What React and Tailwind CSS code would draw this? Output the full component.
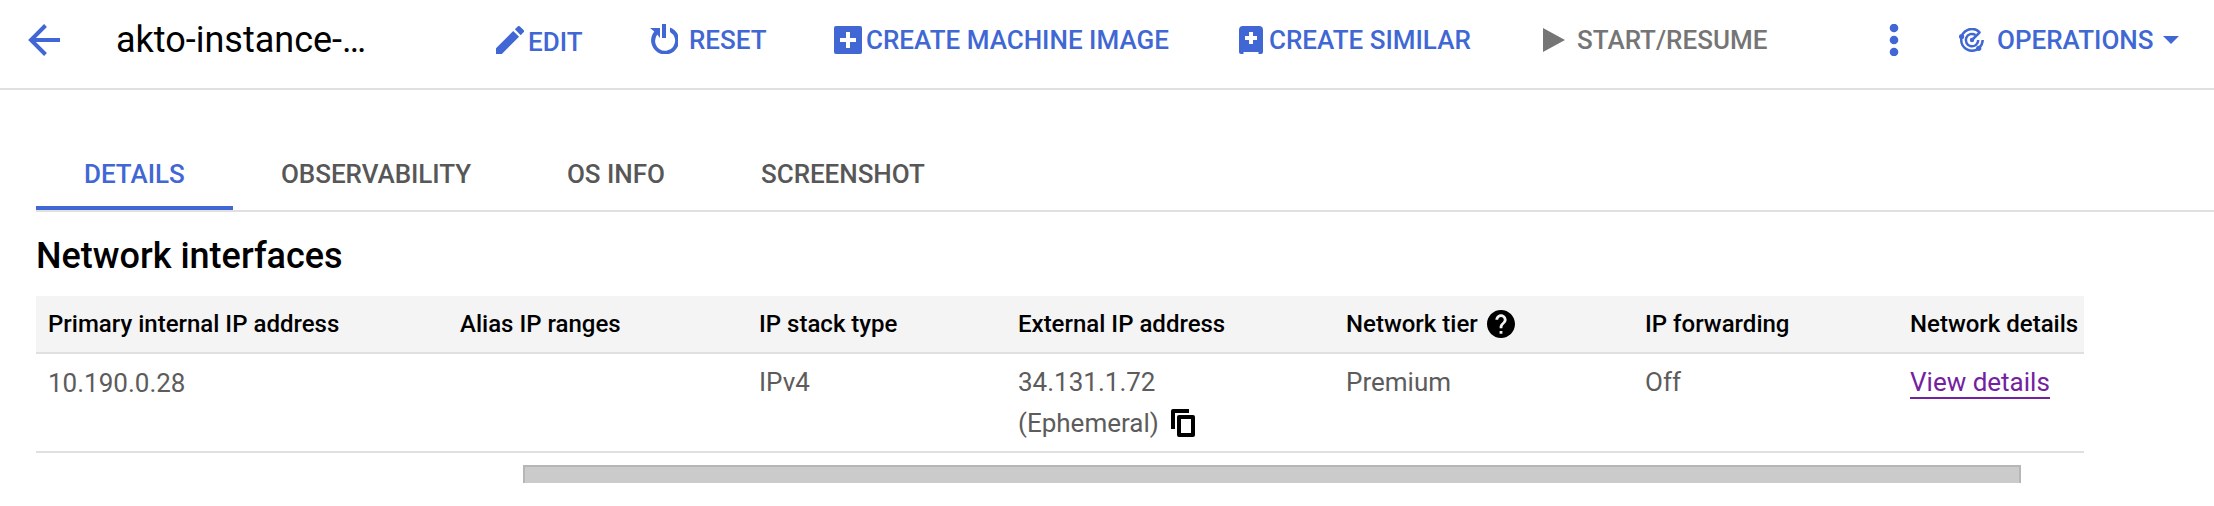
import React from "react";

function Action({ icon, label, className, labelClass = "" }) {
  return (
    <button type="button" className={`flex h-8 shrink-0 items-center whitespace-nowrap ${className}`}>
      {icon}
      <span className={labelClass}>{label}</span>
    </button>
  );
}

const BackIcon = () => (
  <svg className="h-8 w-8 shrink-0" viewBox="0 0 32 32" fill="none" stroke="currentColor" strokeWidth="4">
    <path d="M32 16H4M17.5 1.5 3 16l14.5 14.5" />
  </svg>
);

const PencilIcon = () => (
  <svg className="h-7 w-7 shrink-0" viewBox="3 3 18 18" fill="currentColor">
    <path d="M3 17.25V21h3.75L17.81 9.94l-3.75-3.75L3 17.25zM20.71 7.04a1 1 0 0 0 0-1.41l-2.34-2.34a1 1 0 0 0-1.41 0l-1.83 1.83 3.75 3.75 1.83-1.83z" />
  </svg>
);

const ResetIcon = () => (
  <svg className="h-[30px] w-7 shrink-0 self-start" viewBox="0 0 28 30" fill="currentColor">
    <path d="M12 0h4v14h-4z" />
    <path d="M0 4h10v10L7.3 10.5A10 10 0 1 0 20 8V3.4A14 14 0 1 1 4.3 7.6z" />
  </svg>
);

const AddBoxIcon = () => (
  <svg className="h-7 w-7 shrink-0" viewBox="0 0 28 28">
    <rect width="28" height="28" rx="2" fill="currentColor" />
    <path d="M14 6v16M6 14h16" stroke="white" strokeWidth="4" />
  </svg>
);

const SimilarIcon = () => (
  <svg className="h-7 w-6 shrink-0" viewBox="0 0 24 28">
    <path d="M4 0h16a4 4 0 0 1 4 4v22a2 2 0 0 1-2 2h-2.500v-2h-15v2H2a2 2 0 0 1-2-2V4a4 4 0 0 1 4-4z" fill="currentColor" />
    <path d="M12 6v12M6 12h12" stroke="white" strokeWidth="4" />
  </svg>
);

const PlayIcon = () => (
  <svg className="h-6 w-[22px] shrink-0" viewBox="0 0 22 24" fill="currentColor">
    <path d="M0 0l22 12L0 24z" />
  </svg>
);

const MoreIcon = () => (
  <svg className="h-8 w-[10px] shrink-0" viewBox="0 0 10 32" fill="currentColor">
    <circle cx="5" cy="4" r="4.300" />
    <circle cx="5" cy="16" r="4.300" />
    <circle cx="5" cy="28" r="4.300" />
  </svg>
);

const OperationsIcon = () => (
  <svg className="h-6 w-[25px] shrink-0" viewBox="0 0 25 24" fill="none" stroke="currentColor" strokeWidth="2.500">
    <path d="M20.700 4.300A10.800 10.800 0 0 0 2.200 12a10.800 10.800 0 0 0 17.500 8.300" />
    <path d="M23.700 12a10.800 10.800 0 0 1-3.500 7.700" />
    <path d="M16.500 7A6.200 6.200 0 1 0 19.200 12" />
    <path d="M13 12l8.200-8.200" />
    <circle cx="13" cy="12" r="2.200" fill="currentColor" stroke="none" />
    <circle cx="2.600" cy="8.500" r="2.600" fill="currentColor" stroke="none" />
    <circle cx="19.700" cy="20.300" r="2.600" fill="currentColor" stroke="none" />
  </svg>
);

const HelpIcon = () => (
  <svg className="h-7 w-7 shrink-0" viewBox="2 2 20 20" fill="currentColor">
    <path d="M12 2C6.480 2 2 6.480 2 12s4.480 10 10 10 10-4.480 10-10S17.520 2 12 2zm1 17h-2v-2h2v2zm2.070-7.750-.9.920C13.450 12.900 13 13.500 13 15h-2v-.5c0-1.100.45-2.100 1.170-2.830l1.240-1.260c.37-.36.59-.86.59-1.410 0-1.100-.9-2-2-2s-2 .9-2 2H8c0-2.210 1.790-4 4-4s4 1.790 4 4c0 .88-.36 1.680-.93 2.250z" />
  </svg>
);

const CopyIcon = () => (
  <svg className="h-7 w-6 shrink-0" viewBox="0 0 24 28" fill="none" stroke="black" strokeWidth="4" strokeLinejoin="round">
    <path d="M18 2H2v18" />
    <rect x="8" y="8" width="14" height="18" />
  </svg>
);

const tabs = [
  { label: "DETAILS", width: "w-[197px]", active: true },
  { label: "OBSERVABILITY", width: "w-[286px]" },
  { label: "OS INFO", width: "w-[194px]" },
  { label: "SCREENSHOT", width: "w-[260px]" },
];

const columns = "grid grid-cols-[412px_299px_259px_328px_299px_265px_174px] pl-3";

export default function App() {
  return (
    <div className="h-[506px] w-[2214px] overflow-hidden bg-white font-['Roboto',sans-serif] text-black">
      <header className="flex h-[90px] items-start border-b-2 border-[#e0e0e0] pl-7 pt-6 text-[26px] font-medium leading-8 text-[#4067d3]">
        <BackIcon />
        <h1 className="ml-14 w-[380px] shrink-0 whitespace-nowrap text-[36px] font-normal leading-8 text-black">akto-instance-…</h1>
        <Action icon={<PencilIcon />} label="EDIT" className="w-[154px] gap-1" labelClass="mt-1" />
        <Action icon={<ResetIcon />} label="RESET" className="w-[184px] gap-[11px]" />
        <Action icon={<AddBoxIcon />} label="CREATE MACHINE IMAGE" className="w-[405px] gap-1" />
        <Action icon={<SimilarIcon />} label="CREATE SIMILAR" className="w-[304px] gap-[6px]" />
        <Action icon={<PlayIcon />} label="START/RESUME" className="w-[346px] gap-3 text-[#757575]" />
        <button type="button" aria-label="More actions" className="flex w-[70px] shrink-0"><MoreIcon /></button>
        <Action icon={<OperationsIcon />} label="OPERATIONS" className="gap-[13px]" />
        <svg className="ml-[9px] mt-3 h-2 w-4 shrink-0" viewBox="0 0 16 8" fill="currentColor"><path d="M0 0h16L8 8z" /></svg>
      </header>

      <main className="pl-9 pt-[56px]">
        <nav className="flex h-[66px] border-b-2 border-[#e0e0e0] text-[26px] font-medium tracking-[-0.04px] text-[#575757]">
          {tabs.map((tab) => (
            <a
              key={tab.label}
              className={`flex h-16 shrink-0 items-start border-b-4 pl-12 pt-3 leading-[32px] whitespace-nowrap ${tab.width} ${tab.active ? "border-[#4067d3] text-[#4067d3]" : "border-transparent"}`}
            >
              {tab.label}
            </a>
          ))}
        </nav>

        <h2 className="flex h-[84px] items-center pt-1 text-[36px] font-medium leading-[48px]">Network interfaces</h2>

        <section className="w-[2048px]">
          <div className={`${columns} h-[58px] items-center border-b-2 border-[#e0e0e0] bg-[#f4f4f4] text-[24px] font-medium whitespace-nowrap`}>
            <span>Primary internal IP address</span>
            <span>Alias IP ranges</span>
            <span>IP stack type</span>
            <span>External IP address</span>
            <span className="flex items-center gap-[9px]">Network tier <HelpIcon /></span>
            <span>IP forwarding</span>
            <span>Network details</span>
          </div>
          <div className={`${columns} h-[99px] border-b-2 border-[#e0e0e0] pt-2 text-[26px] leading-10 text-[#5c5c5c] whitespace-nowrap`}>
            <span className="pt-px">10.190.0.28</span>
            <span />
            <span>IPv4</span>
            <div>
              <div>34.131.1.72</div>
              <div className="flex items-center gap-3 pt-px">(Ephemeral) <CopyIcon /></div>
            </div>
            <span>Premium</span>
            <span>Off</span>
            <a className="h-[37px] w-fit border-b-2 border-[#7421a0] text-[#7421a0]">View details</a>
          </div>
        </section>

        <div className="ml-[487px] mt-3 h-[18px] w-[1498px] border-x-2 border-t-2 border-[#b6b6b6] bg-[#cbcbcb]" />
      </main>
    </div>
  );
}
